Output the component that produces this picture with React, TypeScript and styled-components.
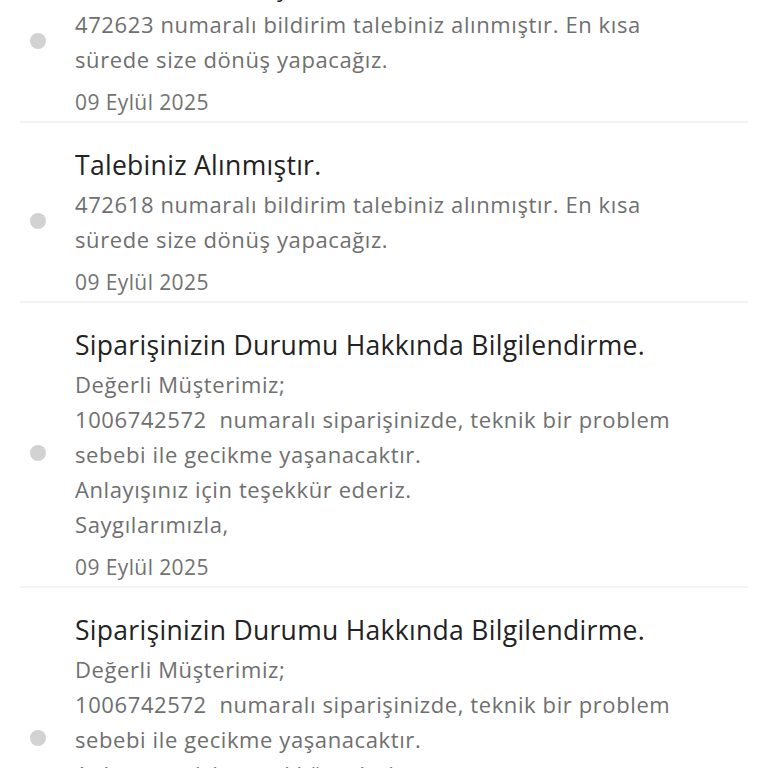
import React from 'react';
import styled, { createGlobalStyle } from 'styled-components';

const GlobalStyle = createGlobalStyle`
  html, body {
    margin: 0;
    padding: 0;
    background: #ffffff;
  }
  body {
    font-family: "Open Sans", "Noto Sans", "Liberation Sans", sans-serif;
    -webkit-font-smoothing: antialiased;
  }
`;

interface Notification {
  id: number;
  title: string;
  lines: string[];
  date: string;
}

const notifications: Notification[] = [
  {
    id: 1,
    title: 'Talebiniz Alınmıştır.',
    lines: ['472623 numaralı bildirim talebiniz alınmıştır. En kısa', 'sürede size dönüş yapacağız.'],
    date: '09 Eylül 2025',
  },
  {
    id: 2,
    title: 'Talebiniz Alınmıştır.',
    lines: ['472618 numaralı bildirim talebiniz alınmıştır. En kısa', 'sürede size dönüş yapacağız.'],
    date: '09 Eylül 2025',
  },
  {
    id: 3,
    title: 'Siparişinizin Durumu Hakkında Bilgilendirme.',
    lines: [
      'Değerli Müşterimiz;',
      '1006742572\u00a0 numaralı siparişinizde, teknik bir problem',
      'sebebi ile gecikme yaşanacaktır.',
      'Anlayışınız için teşekkür ederiz.',
      'Saygılarımızla,',
    ],
    date: '09 Eylül 2025',
  },
  {
    id: 4,
    title: 'Siparişinizin Durumu Hakkında Bilgilendirme.',
    lines: [
      'Değerli Müşterimiz;',
      '1006742572\u00a0 numaralı siparişinizde, teknik bir problem',
      'sebebi ile gecikme yaşanacaktır.',
      'Anlayışınız için teşekkür ederiz.',
      'Saygılarımızla,',
    ],
    date: '09 Eylül 2025',
  },
];

const App: React.FC = () => {
  return (
    <>
      <GlobalStyle />
      <List>
        {notifications.map((n) => (
          <Item key={n.id}>
            <Dot />
            <Content>
              <Title>{n.title}</Title>
              <Body>
                {n.lines.map((line, i) => (
                  <Line key={i}>{line}</Line>
                ))}
              </Body>
              <DateText>{n.date}</DateText>
            </Content>
          </Item>
        ))}
      </List>
    </>
  );
};

export default App;

const List = styled.ul`
  list-style: none;
  margin: -57px 0 0;
  padding: 0 20px;
  display: flex;
  flex-direction: column;
`;

const Item = styled.li`
  display: flex;
  align-items: center;
  gap: 29px;
  padding: 24px 0 4px 10px;
  border-bottom: 2px solid #f3f3f3;
`;

const Dot = styled.span`
  flex: 0 0 16px;
  width: 16px;
  height: 16px;
  margin-bottom: 3px;
  border-radius: 50%;
  background: #d2d2d2;
`;

const Content = styled.div`
  display: flex;
  flex-direction: column;
  min-width: 0;
`;

const Title = styled.h3`
  margin: 0 0 4px;
  font-size: 26.5px;
  line-height: 36px;
  font-weight: 400;
  letter-spacing: 0.3px;
  color: #222222;
`;

const Body = styled.div`
  display: flex;
  flex-direction: column;
`;

const Line = styled.p`
  margin: 0;
  font-size: 22px;
  line-height: 35px;
  letter-spacing: 0.6px;
  color: #6f6f6f;
  white-space: nowrap;
`;

const DateText = styled.span`
  margin-top: 10px;
  font-size: 21px;
  line-height: 30px;
  letter-spacing: 0.4px;
  color: #727272;
`;
